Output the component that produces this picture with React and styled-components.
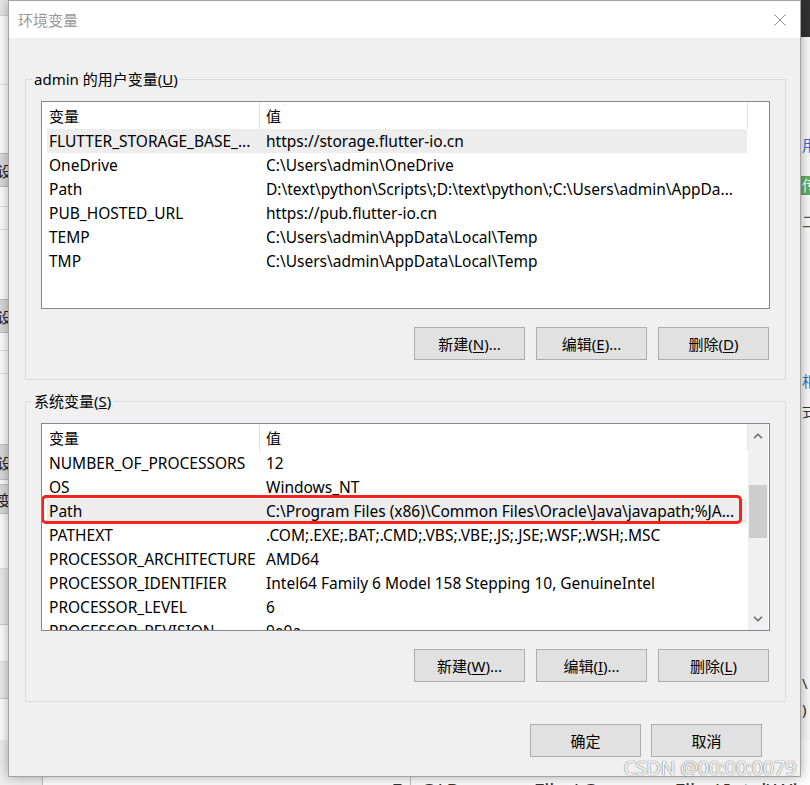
import React from "react";
import styled, { createGlobalStyle } from "styled-components";

const UI_FONT = `"Noto Sans", "Noto Sans CJK SC", sans-serif`;

const GlobalStyle = createGlobalStyle`
  html, body { margin: 0; padding: 0; }
  body {
    width: 810px; height: 785px; overflow: hidden;
    background: #ffffff;
    font-family: ${UI_FONT};
  }
`;

const Desktop = styled.div`
  position: relative;
  width: 810px;
  height: 785px;
  overflow: hidden;
  background: #ffffff;
`;

/* ---------- background windows (partly hidden behind the dialog) ---------- */
const LeftWindow = styled.div`
  position: absolute;
  left: -120px;
  top: 0;
  width: 160px;
  height: 785px;
  background: #ffffff;
  display: flex;
  flex-direction: column;
  align-items: stretch;
`;
const LeftBand = styled.div`
  height: ${(p) => p.$h}px;
  margin-top: ${(p) => p.$mt || 0}px;
  background: ${(p) => p.$bg || "#ffffff"};
  border-bottom: 1px solid ${(p) => p.$line || "#e3e3e3"};
  flex-shrink: 0;
`;
const SideButton = styled.div`
  height: ${(p) => p.$h}px;
  margin-top: ${(p) => p.$mt}px;
  background: #dcdcdc;
  border: 1px solid #c4c4c4;
  font-size: 15px;
  color: #222;
  display: flex;
  align-items: center;
  justify-content: flex-end;
  padding-right: 12px;
  flex-shrink: 0;
  font-family: ${UI_FONT};
`;

const RightWindow = styled.div`
  position: absolute;
  left: 798px;
  top: 0;
  width: 60px;
  height: 785px;
  background: #fafafa;
  display: flex;
  flex-direction: column;
  font-family: ${UI_FONT};
`;
const RightTitle = styled.div`
  height: 37px;
  background: #333333;
  flex-shrink: 0;
`;
const RightText = styled.div`
  margin-top: ${(p) => p.$mt}px;
  padding-left: 4px;
  height: ${(p) => p.$h || 20}px;
  line-height: ${(p) => p.$h || 20}px;
  font-size: 15px;
  color: ${(p) => p.$color || "#333"};
  background: ${(p) => p.$bg || "transparent"};
  flex-shrink: 0;
`;

const BottomWindow = styled.div`
  position: absolute;
  left: 0;
  top: 740px;
  width: 810px;
  height: 45px;
  display: flex;
  font-family: ${UI_FONT};
`;
const BottomPane = styled.div`
  width: ${(p) => p.$w}px;
  background: ${(p) => p.$bg};
  border-right: 1px solid #bdbdbd;
  display: flex;
  justify-content: flex-end;
  padding: 37px 8px 0 0;
  box-sizing: border-box;
  font-size: 20px;
  color: #333;
  flex-shrink: 0;
`;
const BottomPath = styled.div`
  flex: 1;
  padding: 37px 0 0 10px;
  font-size: 20px;
  color: #333;
  white-space: nowrap;
  background: #ffffff;
`;

/* ---------- the dialog ---------- */
const Dialog = styled.div`
  position: absolute;
  left: 8px;
  top: 0;
  width: 793px;
  height: 777px;
  box-sizing: border-box;
  border: 1px solid #a3a3a3;
  background: #f0f0f0;
  box-shadow: 0 0 12px rgba(0, 0, 0, 0.35);
  display: flex;
  flex-direction: column;
  font-family: ${UI_FONT};
  color: #000;
  z-index: 1;
`;

const TitleBar = styled.div`
  height: 37px;
  background: #ffffff;
  display: flex;
  align-items: center;
  justify-content: space-between;
  padding: 0 14px 0 9px;
  flex-shrink: 0;
`;
const Title = styled.div`
  font-size: 15px;
  color: #999999;
  line-height: 20px;
`;
const CloseButton = styled.div`
  width: 12px;
  height: 12px;
  display: flex;
`;

const Body = styled.div`
  padding: 31px 14px 0 16px;
  display: flex;
  flex-direction: column;
`;

const Group = styled.fieldset`
  margin: ${(p) => p.$mt || 0}px 0 0 0;
  padding: 0;
  border: 1px solid #dcdcdc;
  min-width: 0;
`;
const Legend = styled.legend`
  margin-left: 6px;
  padding: 0 2px;
  font-size: 15px;
  line-height: 20px;
  height: 20px;
  color: #000;
`;
const GroupInner = styled.div`
  padding: 12px 15px 19px 15px;
  display: flex;
  flex-direction: column;
`;

const ListView = styled.div`
  height: 208px;
  box-sizing: border-box;
  border: 1px solid #828790;
  background: #ffffff;
  display: flex;
  overflow: hidden;
`;
const ListMain = styled.div`
  width: 706px;
  display: flex;
  flex-direction: column;
  overflow: hidden;
`;
const ListHeader = styled.div`
  height: 27px;
  display: flex;
  flex-shrink: 0;
`;
const HeaderCell = styled.div`
  width: ${(p) => p.$w}px;
  box-sizing: border-box;
  padding-left: ${(p) => p.$pl}px;
  border-right: 1px solid #e5e5e5;
  font-size: 15px;
  line-height: 27px;
  padding-top: 1px;
  white-space: nowrap;
`;
const ListBody = styled.div`
  padding-left: 5px;
  display: flex;
  flex-direction: column;
`;
const Row = styled.div`
  position: relative;
  width: 700px;
  height: 24px;
  flex-shrink: 0;
  display: flex;
  background: ${(p) => (p.$selected ? "#ededed" : "transparent")};
`;
const Cell = styled.div`
  width: ${(p) => (p.$w ? `${p.$w}px` : "auto")};
  flex: ${(p) => (p.$w ? "none" : "1")};
  box-sizing: border-box;
  padding-left: ${(p) => p.$pl}px;
  font-size: 15.5px;
  line-height: 24px;
  white-space: nowrap;
  overflow: hidden;
`;
const Highlight = styled.div`
  position: absolute;
  left: -6px;
  top: -4px;
  right: 5px;
  bottom: -1px;
  border: 3px solid #f5211a;
  border-radius: 5px;
  pointer-events: none;
`;

const ScrollBar = styled.div`
  width: 20px;
  margin-right: 1px;
  background: #f0f0f0;
  display: flex;
  flex-direction: column;
`;
const ScrollArrow = styled.div`
  height: 23px;
  display: flex;
  align-items: center;
  justify-content: center;
  flex-shrink: 0;
`;
const ScrollTrack = styled.div`
  flex: 1;
  display: flex;
  flex-direction: column;
`;
const ScrollThumb = styled.div`
  margin: 38px 1px 0 1px;
  height: 53px;
  background: #cdcdcd;
`;

const ButtonRow = styled.div`
  display: flex;
  justify-content: flex-end;
  gap: ${(p) => p.$gap || 11}px;
  margin-top: ${(p) => p.$mt || 18}px;
  padding-right: ${(p) => p.$pr || 1}px;
`;
const Button = styled.button`
  width: 111px;
  height: 33px;
  box-sizing: border-box;
  border: 1px solid #adadad;
  background: #e1e1e1;
  font-family: ${UI_FONT};
  font-size: 15px;
  color: #000;
  padding: 0;
  display: flex;
  align-items: center;
  justify-content: center;
  u { text-underline-offset: 2px; }
`;

const Watermark = styled.div`
  position: absolute;
  right: 14px;
  bottom: 4px;
  font-family: "Noto Sans", sans-serif;
  font-size: 20px;
  letter-spacing: -0.4px;
  color: #f7f7f7;
  text-shadow: 0 0 1px #6f6f6f, 0 0 1px #6f6f6f;
  z-index: 2;
  white-space: nowrap;
`;

const Chevron = ({ up }) => (
  <svg width="10" height="6" viewBox="0 0 10 6">
    <path
      d={up ? "M1 5.2 L5 1.2 L9 5.2" : "M1 0.8 L5 4.8 L9 0.8"}
      fill="none"
      stroke="#606060"
      strokeWidth="1.3"
    />
  </svg>
);

const userVars = [
  ["FLUTTER_STORAGE_BASE_...", "https://storage.flutter-io.cn", true],
  ["OneDrive", "C:\\Users\\admin\\OneDrive"],
  ["Path", "D:\\text\\python\\Scripts\\;D:\\text\\python\\;C:\\Users\\admin\\AppDa..."],
  ["PUB_HOSTED_URL", "https://pub.flutter-io.cn"],
  ["TEMP", "C:\\Users\\admin\\AppData\\Local\\Temp"],
  ["TMP", "C:\\Users\\admin\\AppData\\Local\\Temp"],
];

const sysVars = [
  ["NUMBER_OF_PROCESSORS", "12"],
  ["OS", "Windows_NT"],
  ["Path", "C:\\Program Files (x86)\\Common Files\\Oracle\\Java\\javapath;%JA...", true, true],
  ["PATHEXT", ".COM;.EXE;.BAT;.CMD;.VBS;.VBE;.JS;.JSE;.WSF;.WSH;.MSC"],
  ["PROCESSOR_ARCHITECTURE", "AMD64"],
  ["PROCESSOR_IDENTIFIER", "Intel64 Family 6 Model 158 Stepping 10, GenuineIntel"],
  ["PROCESSOR_LEVEL", "6"],
  ["PROCESSOR_REVISION", "9e0a"],
];

function VarList({ rows, scroll }) {
  return (
    <ListView>
      <ListMain>
        <ListHeader>
          <HeaderCell $w={218} $pl={7}>变量</HeaderCell>
          <HeaderCell $w={488} $pl={6}>值</HeaderCell>
        </ListHeader>
        <ListBody>
          {rows.map(([name, value, selected, marked], i) => (
            <Row key={i} $selected={selected}>
              <Cell $w={212} $pl={2}>{name}</Cell>
              <Cell $pl={7}>{value}</Cell>
              {marked && <Highlight />}
            </Row>
          ))}
        </ListBody>
      </ListMain>
      {scroll && (
        <ScrollBar>
          <ScrollArrow><Chevron up /></ScrollArrow>
          <ScrollTrack><ScrollThumb /></ScrollTrack>
          <ScrollArrow><Chevron /></ScrollArrow>
        </ScrollBar>
      )}
    </ListView>
  );
}

export default function App() {
  return (
    <>
      <GlobalStyle />
      <Desktop>
        <LeftWindow>
          <LeftBand $h={15} $bg="#e9e9e9" $line="#d6d6d6" />
          <LeftBand $h={68} />
          <SideButton $mt={68} $h={32}>设置</SideButton>
          <LeftBand $h={19} />
          <LeftBand $h={22} />
          <SideButton $mt={69} $h={32}>设置</SideButton>
          <LeftBand $h={17} />
          <LeftBand $h={22} />
          <SideButton $mt={70} $h={34}>设置</SideButton>
          <SideButton $mt={4} $h={28}>变量</SideButton>
          <LeftBand $h={54} $bg="#ffffff" />
          <LeftBand $h={55} $bg="#ececec" $line="#d0d0d0" />
          <LeftBand $h={36} $bg="#ffffff" />
          <LeftBand $h={36} $bg="#ececec" $line="#d0d0d0" />
        </LeftWindow>

        <RightWindow>
          <RightTitle />
          <RightText $mt={98} $color="#2f6bd6">用</RightText>
          <RightText $mt={21} $h={19} $bg="#5fb05f" $color="#ffffff">传</RightText>
          <RightText $mt={16} $color="#555">二</RightText>
          <RightText $mt={140} $color="#1f7fc0">相</RightText>
          <RightText $mt={10} $color="#333">式</RightText>
          <RightText $mt={252} $color="#333">\</RightText>
          <RightText $mt={6} $color="#333">)</RightText>
        </RightWindow>

        <BottomWindow>
          <BottomPane $w={43} $bg="#efefef" />
          <BottomPane $w={368} $bg="#ffffff">F</BottomPane>
          <BottomPath>C:\Program Files\Common Files\Intel\WirelessCommon\</BottomPath>
        </BottomWindow>

        <Dialog>
          <TitleBar>
            <Title>环境变量</Title>
            <CloseButton>
              <svg width="12" height="12" viewBox="0 0 12 12">
                <path d="M0.5 0.5 L11.5 11.5 M11.5 0.5 L0.5 11.5" stroke="#8f8f8f" strokeWidth="1" fill="none" />
              </svg>
            </CloseButton>
          </TitleBar>

          <Body>
            <Group>
              <Legend>admin 的用户变量(<u>U</u>)</Legend>
              <GroupInner>
                <VarList rows={userVars} />
                <ButtonRow>
                  <Button>新建(<u>N</u>)...</Button>
                  <Button>编辑(<u>E</u>)...</Button>
                  <Button>删除(<u>D</u>)</Button>
                </ButtonRow>
              </GroupInner>
            </Group>

            <Group $mt={11}>
              <Legend>系统变量(<u>S</u>)</Legend>
              <GroupInner>
                <VarList rows={sysVars} scroll />
                <ButtonRow>
                  <Button>新建(<u>W</u>)...</Button>
                  <Button>编辑(<u>I</u>)...</Button>
                  <Button>删除(<u>L</u>)</Button>
                </ButtonRow>
              </GroupInner>
            </Group>

            <ButtonRow $mt={22} $gap={10} $pr={24}>
              <Button>确定</Button>
              <Button>取消</Button>
            </ButtonRow>
          </Body>
        </Dialog>

        <Watermark>CSDN @00:00:0079</Watermark>
      </Desktop>
    </>
  );
}
